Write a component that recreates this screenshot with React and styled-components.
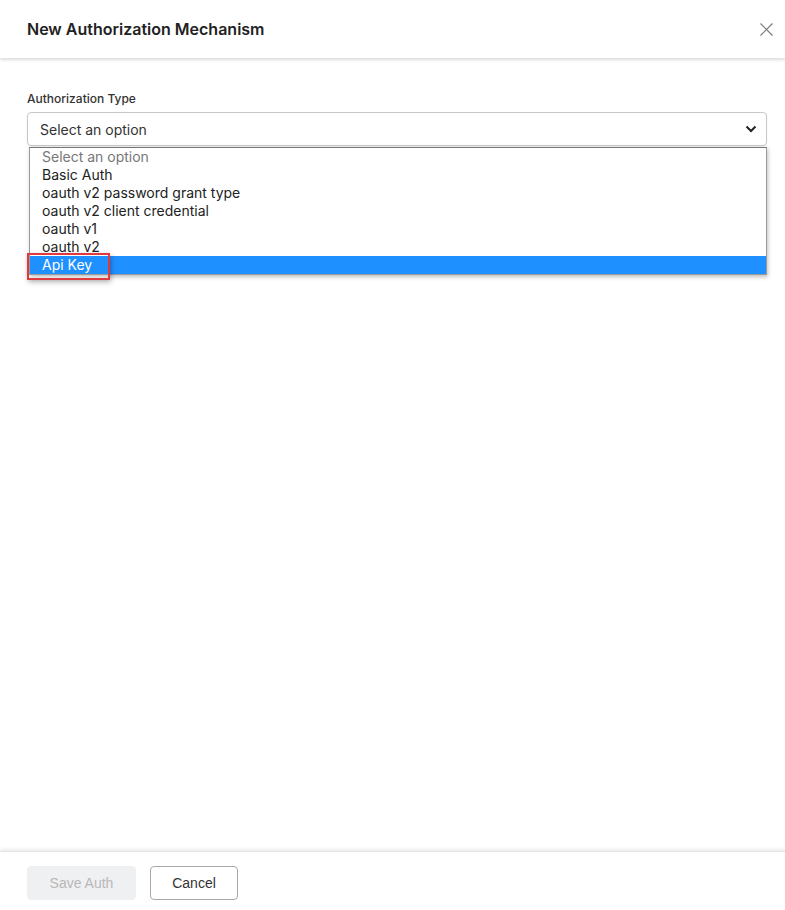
import React from "react";
import styled, { createGlobalStyle } from "styled-components";

const GlobalStyle = createGlobalStyle`
  html, body {
    margin: 0;
    padding: 0;
    background: #ffffff;
    font-family: Inter, "Noto Sans", "Liberation Sans", sans-serif;
    color: #222;
  }
  * {
    box-sizing: border-box;
  }
`;

const Modal = styled.div`
  width: 785px;
  height: 910px;
  display: flex;
  flex-direction: column;
  background: #fff;
`;

const Header = styled.div`
  height: 58px;
  flex-shrink: 0;
  display: flex;
  align-items: center;
  justify-content: space-between;
  padding: 0 12px 0 27px;
  box-shadow: 0 2px 3px rgba(0, 0, 0, 0.14);
  position: relative;
  z-index: 1;
`;

const Title = styled.h1`
  margin: 0;
  font-size: 16px;
  font-weight: 600;
  color: #222;
`;

const CloseButton = styled.button`
  border: none;
  background: none;
  padding: 0;
  width: 14px;
  height: 14px;
  display: flex;
  align-items: center;
  justify-content: center;
  cursor: pointer;
`;

const Body = styled.div`
  flex: 1;
  padding: 33px 18px 0 27px;
`;

const Label = styled.label`
  display: block;
  font-size: 12px;
  font-weight: 500;
  color: #333;
  line-height: 15px;
  margin-bottom: 6px;
`;

const SelectWrap = styled.div`
  position: relative;
`;

const SelectBox = styled.div`
  height: 34px;
  border: 1px solid #c8c8c8;
  border-radius: 4px;
  display: flex;
  align-items: center;
  justify-content: space-between;
  padding: 0 9px 0 12px;
  font-size: 14px;
  color: #333;
  box-shadow: 0 1px 2px rgba(0, 0, 0, 0.08);
`;

const OptionList = styled.ul`
  position: absolute;
  top: 35px;
  left: 2px;
  right: 0;
  margin: 0;
  padding: 0;
  list-style: none;
  background: #fff;
  border: 1px solid #9a9a9a;
  border-top-color: #767676;
  box-shadow: 1px 2px 4px rgba(0, 0, 0, 0.25);
`;

const Option = styled.li`
  height: 18px;
  line-height: 18px;
  padding-left: 12px;
  font-size: 14px;
  color: ${(props) => (props.selected ? "#fff" : props.placeholder ? "#777" : "#222")};
  background: ${(props) => (props.selected ? "#1e90ff" : "transparent")};
  position: relative;
`;

const Highlight = styled.span`
  position: absolute;
  left: -3px;
  top: -3px;
  width: 83px;
  height: 27px;
  border: 2px solid #e0393e;
  box-shadow: 1px 2px 5px rgba(0, 0, 0, 0.3);
`;

const Footer = styled.div`
  height: 59px;
  flex-shrink: 0;
  display: flex;
  align-items: flex-start;
  gap: 14px;
  padding: 14px 27px 0;
  border-top: 1px solid #e4e4e4;
  box-shadow: 0 -2px 3px rgba(0, 0, 0, 0.08);
`;

const Button = styled.button`
  height: 34px;
  padding: 0;
  border-radius: 4px;
  font-family: "Liberation Sans", Arial, sans-serif;
  font-size: 14px;
  white-space: nowrap;
  border: 1px solid ${(props) => (props.disabled ? "#eff0f2" : "#a8a8a8")};
  background: ${(props) => (props.disabled ? "#eff0f2" : "#fff")};
  color: ${(props) => (props.disabled ? "#b8b8b8" : "#333")};
  width: ${(props) => props.w}px;
`;

const options = [
  "Basic Auth",
  "oauth v2 password grant type",
  "oauth v2 client credential",
  "oauth v1",
  "oauth v2",
  "Api Key",
];

const App = () => {
  return (
    <Modal>
      <GlobalStyle />
      <Header>
        <Title>New Authorization Mechanism</Title>
        <CloseButton aria-label="Close">
          <svg width="13" height="13" viewBox="0 0 13 13">
            <path d="M0.5 0.5 L12.5 12.5 M12.5 0.5 L0.5 12.5" stroke="#7a7a7a" strokeWidth="1.2" fill="none" />
          </svg>
        </CloseButton>
      </Header>
      <Body>
        <Label>Authorization Type</Label>
        <SelectWrap>
          <SelectBox>
            <span>Select an option</span>
            <svg width="12" height="8" viewBox="0 0 12 8">
              <path d="M1.5 1.5 L6 6 L10.5 1.5" stroke="#222" strokeWidth="2" fill="none" />
            </svg>
          </SelectBox>
          <OptionList>
            <Option placeholder>Select an option</Option>
            {options.map((o) => (
              <Option key={o} selected={o === "Api Key"}>
                {o}
                {o === "Api Key" && <Highlight />}
              </Option>
            ))}
          </OptionList>
        </SelectWrap>
      </Body>
      <Footer>
        <Button disabled w={109}>Save Auth</Button>
        <Button w={88}>Cancel</Button>
      </Footer>
    </Modal>
  );
};

export default App;
